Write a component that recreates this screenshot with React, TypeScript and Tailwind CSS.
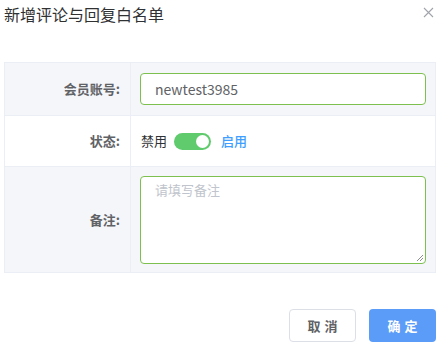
export default function App() {
  const font = { fontFamily: '"Noto Sans CJK SC", "Liberation Sans", sans-serif' };
  return (
    <div className="relative h-[345px] w-[442px] bg-white" style={font}>
      {/* Header */}
      <div className="flex items-start justify-between pl-[4px] pr-[8px] pt-[3px]">
        <h2 className="text-[16px] leading-[22px] text-[#303133]">新增评论与回复白名单</h2>
        <svg className="mt-[4px]" width="11" height="11" viewBox="0 0 11 11">
          <path d="M1 1L10 10M10 1L1 10" stroke="#a0a3aa" strokeWidth="1.1" />
        </svg>
      </div>

      {/* Form table */}
      <div className="ml-[4px] mt-[37px] w-[432px] border border-[#ebeef5] text-[13px]">
        <div className="flex h-[52px] bg-[#f5f6fa]">
          <div className="flex w-[126px] items-center justify-end border-r border-[#ebeef5] pr-[10px] font-bold text-[#606266]">
            会员账号:
          </div>
          <div className="flex flex-1 items-center pl-[9px] pr-[9px]">
            <div className="flex h-[32px] w-full items-center rounded-[4px] border border-[#7ec050] bg-white pl-[14px] text-[14px] text-[#606266]">
              newtest3985
            </div>
          </div>
        </div>
        <div className="flex h-[51px] border-t border-[#ebeef5] bg-white">
          <div className="flex w-[126px] items-center justify-end border-r border-[#ebeef5] pr-[10px] font-bold text-[#606266]">
            状态:
          </div>
          <div className="flex flex-1 items-center pl-[10px]">
            <span className="text-[#303133]">禁用</span>
            <span className="ml-[7px] flex h-[17px] w-[37px] items-center justify-end rounded-full bg-[#5fcb6d] pr-[2px]">
              <span className="h-[13px] w-[13px] rounded-full bg-white" />
            </span>
            <span className="ml-[10px] font-medium text-[#409eff]">启用</span>
          </div>
        </div>
        <div className="flex h-[106px] border-t border-[#ebeef5] bg-[#f5f6fa]">
          <div className="flex w-[126px] items-center justify-end border-r border-[#ebeef5] pr-[10px] font-bold text-[#606266]">
            备注:
          </div>
          <div className="flex flex-1 items-center pl-[9px] pr-[9px]">
            <div className="relative h-[88px] w-full rounded-[4px] border border-[#7ec050] bg-white pl-[14px] pt-[3px] text-[13px] text-[#c0c4cc]">
              请填写备注
              <svg className="absolute bottom-[1px] right-[1px]" width="8" height="8" viewBox="0 0 8 8">
                <path d="M1 7L7 1M4 7L7 4" stroke="#707070" strokeWidth="0.8" />
              </svg>
            </div>
          </div>
        </div>
      </div>

      {/* Footer */}
      <div className="mt-[36px] flex justify-end gap-[13px] pr-[6px]">
        <button className="h-[33px] w-[67px] rounded-[4px] border border-[#dcdfe6] bg-white pl-[4px] text-[13px] font-bold tracking-[4px] text-[#606266]">
          取消
        </button>
        <button className="h-[33px] w-[67px] rounded-[4px] bg-[#5a9cf8] pl-[4px] text-[13px] font-bold tracking-[4px] text-white">
          确定
        </button>
      </div>
    </div>
  );
}
